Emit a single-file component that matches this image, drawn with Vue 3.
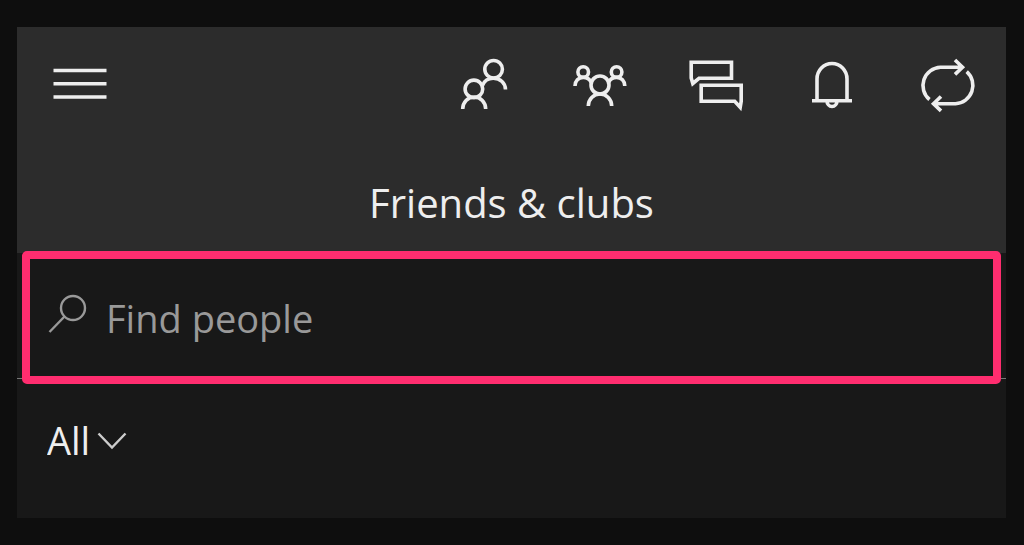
<script setup>
import { ref } from 'vue'

const query = ref('')
const filter = ref('All')
</script>

<template>
  <main class="panel">
    <header class="header">
      <nav class="toolbar" aria-label="Main">
        <button class="tool menu" type="button" aria-label="Menu">
          <svg viewBox="0 0 60 60"><path d="M3.500 16.500h53M3.500 29.700h53M3.500 43h53" /></svg>
        </button>
        <button class="tool" type="button" aria-label="Friends">
          <svg viewBox="0 0 60 60">
            <circle cx="39.600" cy="15.300" r="8.800" />
            <circle cx="19.900" cy="34.900" r="8.800" />
            <path d="M8.700 55a11.500 12 0 0 1 23 0M28.500 31.500C30 27 34 24.200 39.300 24.200c7 0 12.200 5 12.200 11.300" />
          </svg>
        </button>
        <button class="tool" type="button" aria-label="Clubs">
          <svg viewBox="0 0 60 60">
            <circle cx="30" cy="31" r="9" />
            <circle cx="13.200" cy="18" r="5.300" />
            <circle cx="46.600" cy="18" r="5.300" />
            <path d="M18.300 52a11.700 12 0 0 1 23.400 0M5 32c0-5 3.500-8.600 8.200-8.600 3.600 0 6.600 2 8.200 5.200M54.800 32c0-5-3.500-8.600-8.200-8.600-3.600 0-6.600 2-8.200 5.200" />
          </svg>
        </button>
        <button class="tool" type="button" aria-label="Messages">
          <svg viewBox="0 0 60 60">
            <path d="M5.200 8.300h40.300v16H13L6.800 29.500 5.200 24zM15.200 31.300h40v16l-1 6-5.500-6H15.200z" />
          </svg>
        </button>
        <button class="tool" type="button" aria-label="Notifications">
          <svg viewBox="0 0 60 60">
            <path d="M15 46V25a15 15.500 0 0 1 30 0v21M10 46.700h40M25 47a5 5.500 0 0 0 10 0" />
          </svg>
        </button>
        <button class="tool" type="button" aria-label="Refresh">
          <svg viewBox="0 0 60 60">
            <path d="M11.500 45.500A18.300 18.300 0 0 1 22.500 13.200H44M37 6l7.500 7.200L37 20.400M48.700 17.700A18.300 18.300 0 0 1 37.500 49.700H16M23 42.500l-7.500 7.200L23 56.900" />
          </svg>
        </button>
      </nav>
      <h1 class="title">Friends &amp; clubs</h1>
    </header>

    <form class="search" role="search" @submit.prevent>
      <label class="field">
        <svg class="lens" viewBox="0 0 40 40" aria-hidden="true">
          <circle cx="25" cy="14" r="12" />
          <path d="M16.500 22.500L1.500 38" />
        </svg>
        <input v-model="query" type="text" placeholder="Find people" aria-label="Find people" />
      </label>
    </form>

    <div class="filter">
      <select v-model="filter" aria-label="Filter">
        <option>All</option>
      </select>
      <svg class="chevron" viewBox="0 0 30 18" aria-hidden="true"><path d="M1.500 1.500L15 15.500 28.500 1.500" /></svg>
    </div>
  </main>
</template>

<style>
body {
  background: #0e0e0e;
}
</style>

<style scoped>
.panel {
  margin: 27px 18px 27px 17px;
  background: #181818;
  color: #eeeeee;
  font-family: "Open Sans", "Noto Sans", sans-serif;
  font-size: 38px;
}

.header {
  padding-bottom: 22px;
  background: #2c2c2c;
}

.toolbar {
  display: flex;
  height: 114px;
}

.tool {
  display: flex;
  flex: 0 0 116px;
  align-items: center;
  justify-content: center;
  padding: 0;
  border: 0;
  background: none;
  color: inherit;
}

.menu {
  flex-basis: 126px;
  margin-right: auto;
}

svg {
  display: block;
  flex: none;
  fill: none;
  stroke: currentColor;
  stroke-width: 2.4;
}

.tool svg {
  width: 60px;
  height: 60px;
  stroke-width: 3.6;
}

.title {
  margin: 0;
  padding-top: 34px;
  font-size: 40px;
  font-weight: 400;
  line-height: 56px;
  text-align: center;
}

.search {
  display: flow-root;
  height: 125px;
  border-bottom: 1px solid #777777;
}

.field {
  display: flex;
  gap: 18px;
  align-items: center;
  box-sizing: border-box;
  height: 133px;
  margin: -2px 5px 0;
  padding: 0 18px;
  border: 8px solid #ff2d6f;
  border-radius: 5px;
  color: #999999;
  background: #181818;
}

.lens {
  width: 40px;
  height: 40px;
  margin-bottom: 8px;
}

.field input {
  flex: 1;
  min-width: 0;
  padding: 0;
  border: 0;
  outline: 0;
  background: none;
  color: inherit;
  font: inherit;
}

.field input::placeholder {
  color: inherit;
  opacity: 1;
}

.filter {
  display: flex;
  gap: 6px;
  align-items: center;
  box-sizing: border-box;
  height: 139px;
  padding: 0 30px 18px;
}

.filter select {
  padding: 0;
  border: 0;
  appearance: none;
  background: none;
  color: inherit;
  font: inherit;
}

.chevron {
  width: 30px;
  height: 18px;
  margin-top: 2px;
  color: #cccccc;
}
</style>
